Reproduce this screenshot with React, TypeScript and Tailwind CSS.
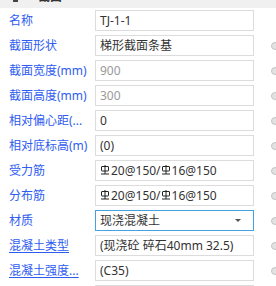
type Row = {
  label: string;
  value: string;
  muted?: boolean;
  link?: boolean;
  select?: boolean;
  rebar?: boolean;
  dot?: boolean;
};

const rows: Row[] = [
  { label: "名称", value: "TJ-1-1" },
  { label: "截面形状", value: "梯形截面条基", dot: true },
  { label: "截面宽度(mm)", value: "900", muted: true, dot: true },
  { label: "截面高度(mm)", value: "300", muted: true, dot: true },
  { label: "相对偏心距(...", value: "0", dot: true },
  { label: "相对底标高(m)", value: "(0)", dot: true },
  { label: "受力筋", value: "20@150/|16@150", rebar: true, dot: true },
  { label: "分布筋", value: "20@150/|16@150", rebar: true, dot: true },
  { label: "材质", value: "现浇混凝土", select: true, dot: true },
  { label: "混凝土类型", value: "(现浇砼 碎石40mm 32.5)", link: true, dot: true },
  { label: "混凝土强度...", value: "(C35)", link: true, dot: true },
  { label: "", value: "" },
];

function Rebar() {
  return (
    <svg width="10" height="10" viewBox="0 0 10 10" className="inline-block mr-px -mt-[3px] align-middle">
      <rect x="1.5" y="1.5" width="7" height="4.5" rx="0.5" fill="none" stroke="#222" strokeWidth="1" />
      <path d="M5 0v9M1 9h8" stroke="#222" strokeWidth="1" fill="none" />
    </svg>
  );
}

function Value({ row }: { row: Row }) {
  if (!row.rebar) return <>{row.value}</>;
  const [a, b] = row.value.split("|");
  return (
    <>
      <Rebar />
      {a}
      <Rebar />
      {b}
    </>
  );
}

export default function App() {
  return (
    <div
      className="w-[276px] h-[286px] overflow-hidden bg-white text-[12px] leading-[16px]"
      style={{ fontFamily: '"Noto Sans", "Noto Sans CJK SC", sans-serif' }}
    >
      <div className="h-[8px] overflow-hidden bg-[#f0f0f0]">
        <div className="-mt-[11px] flex items-center gap-[20px] pl-[13px] text-[12px] font-bold text-[#333]">
          <span className="h-[10px] w-[5px] bg-[#444]" />
          <span>截面</span>
        </div>
      </div>
      {rows.map((row, i) => (
        <div key={i} className="flex h-[25px] items-center">
          <div className="w-[95px] shrink-0 overflow-hidden whitespace-nowrap pl-[9px] text-[#2e5cf0]">
            {row.link ? <span className="underline underline-offset-2">{row.label}</span> : row.label}
          </div>
          <div
            className={`flex h-[21px] w-[159px] shrink-0 items-center justify-between border px-[4px] whitespace-nowrap ${
              row.select ? "border-[#45a1e0]" : "border-[#dcdcdc]"
            } ${row.muted ? "text-[#9a9a9a]" : "text-[#333]"}`}
          >
            <span>
              <Value row={row} />
            </span>
            {row.select && (
              <span className="mr-[8px] h-0 w-0 border-x-[3px] border-t-[3px] border-x-transparent border-t-[#555]" />
            )}
          </div>
          {row.dot && (
            <span className="ml-[17px] h-[8px] w-[8px] shrink-0 rounded-full border border-[#c4c4c4] bg-[#e2e2e2]" />
          )}
        </div>
      ))}
    </div>
  );
}
